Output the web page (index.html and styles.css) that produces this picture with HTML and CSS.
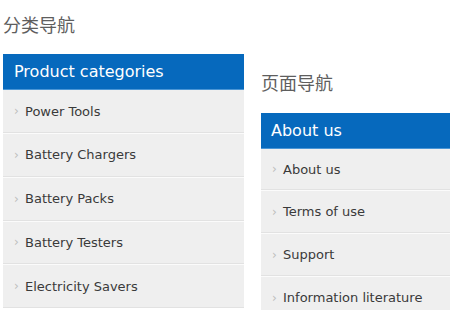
FILE: index.html
```html
<!DOCTYPE html>
<html lang="zh">
<head>
<meta charset="utf-8">
<link rel="stylesheet" href="styles.css">
</head>
<body>
<div class="page">
  <section class="col">
    <h2 class="title">分类导航</h2>
    <div class="box">
      <div class="box-head">Product categories</div>
      <ul class="menu">
        <li><a href="#">Power Tools</a></li>
        <li><a href="#">Battery Chargers</a></li>
        <li><a href="#">Battery Packs</a></li>
        <li><a href="#">Battery Testers</a></li>
        <li><a href="#">Electricity Savers</a></li>
      </ul>
    </div>
  </section>
  <section class="col col-right">
    <h2 class="title">页面导航</h2>
    <div class="box">
      <div class="box-head">About us</div>
      <ul class="menu menu-tight">
        <li><a href="#">About us</a></li>
        <li><a href="#">Terms of use</a></li>
        <li><a href="#">Support</a></li>
        <li><a href="#">Information literature</a></li>
      </ul>
    </div>
  </section>
</div>
</body>
</html>
```

FILE: styles.css
```css
html, body {
  margin: 0;
  padding: 0;
  background: #fff;
  overflow: hidden;
}
.page {
  display: flex;
  gap: 17px;
  padding-left: 3px;
  width: 450px;
  height: 310px;
  overflow: hidden;
  box-sizing: border-box;
  font-family: "DejaVu Sans", Verdana, sans-serif;
}
.col {
  flex: 0 0 241px;
  width: 241px;
}
.title {
  margin: 12px 0 18px;
  font-family: "Noto Sans CJK SC", sans-serif;
  font-weight: normal;
  font-size: 18px;
  line-height: 24px;
  color: #5e5e5e;
}
.col-right .title {
  margin-top: 70px;
  margin-bottom: 19px;
}
.box-head {
  background: #0669bd;
  color: #fff;
  font-size: 16px;
  height: 35px;
  line-height: 35px;
  padding-left: 11px;
  border-bottom: 1px solid #4a96d6;
}
.col-right .box-head {
  padding-left: 10px;
}
.menu {
  list-style: none;
  margin: 0;
  padding: 0;
  background: #efefef;
}
.menu li {
  height: 41.75px;
  border-bottom: 1px solid #e2e2e2;
  border-top: 1px solid #fbfbfb;
  display: flex;
  align-items: center;
}
.menu li:first-child {
  border-top: none;
  height: 42px;
}
.menu-tight li {
  height: 41px;
}
.menu-tight li:first-child {
  height: 40px;
}
.menu a {
  display: flex;
  align-items: center;
  color: #3a3a3a;
  text-decoration: none;
  font-size: 13px;
  padding-left: 11px;
}
.menu a::before {
  content: "›";
  color: #bdbdbd;
  font-size: 12px;
  width: 11px;
}
```
